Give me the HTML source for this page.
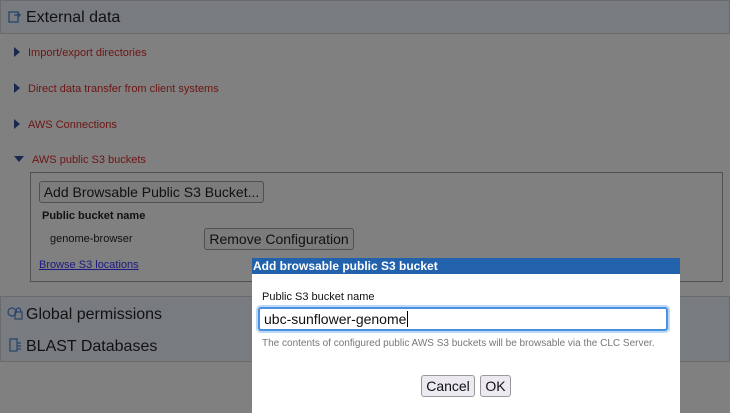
<!DOCTYPE html>
<html><head><style>
body{margin:0;width:730px;height:413px;overflow:hidden;background:#808080;font-family:"Liberation Sans",Arial,sans-serif;position:relative}
.abs{position:absolute}
.hdr{position:absolute;left:0;width:728px;background:#787c81;border:1px solid #6a6a6a;font-size:16px;color:#111}
.item{position:absolute;left:14px;font-size:11px;color:#6e1414}
.tri{display:inline-block;width:0;height:0;border-top:5px solid transparent;border-bottom:5px solid transparent;border-left:6px solid #1a2850;margin-right:8px;vertical-align:-1px}
.btn{position:absolute;background:#7c7c7c;border:1px solid #505050;border-radius:3px;font-size:14px;color:#111;text-align:center}
.dbtn{position:absolute;background:#eceaf0;border:1px solid #999;border-radius:3px;font-size:14px;color:#111;text-align:center;line-height:20px}
</style></head><body>
<div class="hdr" style="top:0;height:32px">
 <svg class="abs" style="left:7px;top:8px" width="14" height="14" viewBox="0 0 14 14"><rect x="1" y="3" width="9" height="10" fill="none" stroke="#284468" stroke-width="1.3"/><path d="M6 6h6M10 4l2 2-2 2" stroke="#284468" fill="none" stroke-width="1.3"/></svg>
 <span class="abs" style="left:25px;top:8px">External data</span>
</div>
<div class="item" style="top:47px"><span class="tri"></span>Import/export directories</div>
<div class="item" style="top:83px"><span class="tri"></span>Direct data transfer from client systems</div>
<div class="item" style="top:119px"><span class="tri"></span>AWS Connections</div>
<div class="item" style="top:154px"><span class="tri" style="border-left:5px solid transparent;border-right:5px solid transparent;border-top:6px solid #1a2850;border-bottom:0;vertical-align:1px"></span>AWS public S3 buckets</div>
<div class="abs" style="left:30px;top:172px;width:691px;height:108px;border:1px solid #505050"></div>
<div class="btn" style="left:39px;top:181px;width:223px;height:20px;line-height:20px">Add Browsable Public S3 Bucket...</div>
<div class="abs" style="left:42px;top:210px;font-size:11px;font-weight:bold;color:#111">Public bucket name</div>
<div class="abs" style="left:50px;top:233px;font-size:11px;color:#111">genome-browser</div>
<div class="btn" style="left:204px;top:228px;width:148px;height:20px;line-height:20px">Remove Configuration</div>
<div class="abs" style="left:39px;top:259px;font-size:11px;color:#1a1a80;text-decoration:underline">Browse S3 locations</div>
<div class="hdr" style="top:296px;height:32px">
 <svg class="abs" style="left:6px;top:9px" width="16" height="14" viewBox="0 0 16 14"><circle cx="5" cy="6" r="4" fill="none" stroke="#284468" stroke-width="1.2"/><rect x="8" y="6" width="7" height="7" fill="none" stroke="#284468" stroke-width="1.2"/><path d="M9.5 6V4a2 2 0 0 1 4 0v2" fill="none" stroke="#284468" stroke-width="1.2"/></svg>
 <span class="abs" style="left:25px;top:9px">Global permissions</span>
</div>
<div class="hdr" style="top:329px;height:32px;border-top:0">
 <svg class="abs" style="left:7px;top:8px" width="14" height="16" viewBox="0 0 14 16"><path d="M2 2h7v12H2z" fill="none" stroke="#284468" stroke-width="1.2"/><path d="M9 6h4M9 9h4M9 12h4" stroke="#284468" stroke-width="1.2"/></svg>
 <span class="abs" style="left:25px;top:9px">BLAST Databases</span>
</div>
<div class="abs" style="left:252px;top:258px;width:428px;height:155px;background:#fff">
 <div style="height:16px;background:#2262ac;color:#fff;font-size:12px;font-weight:bold;line-height:16px;padding-left:1px">Add browsable public S3 bucket</div>
 <div class="abs" style="left:10px;top:33px;font-size:11px;color:#111">Public S3 bucket name</div>
 <div class="abs" style="left:6px;top:49px;width:402px;height:20px;border:2px solid #4a90e0;border-radius:3px;box-shadow:0 0 0 2px #bcd8f8;font-size:14px;line-height:20px;padding-left:4px;box-sizing:content-box;color:#111">ubc-sunflower-genome<span style="border-left:1px solid #000;margin-left:1px"></span></div>
 <div class="abs" style="left:10px;top:80px;font-size:10px;color:#777">The contents of configured public AWS S3 buckets will be browsable via the CLC Server.</div>
 <div class="dbtn" style="left:169px;top:117px;width:52px;height:20px">Cancel</div>
 <div class="dbtn" style="left:228px;top:117px;width:29px;height:20px">OK</div>
</div>
</body></html>
